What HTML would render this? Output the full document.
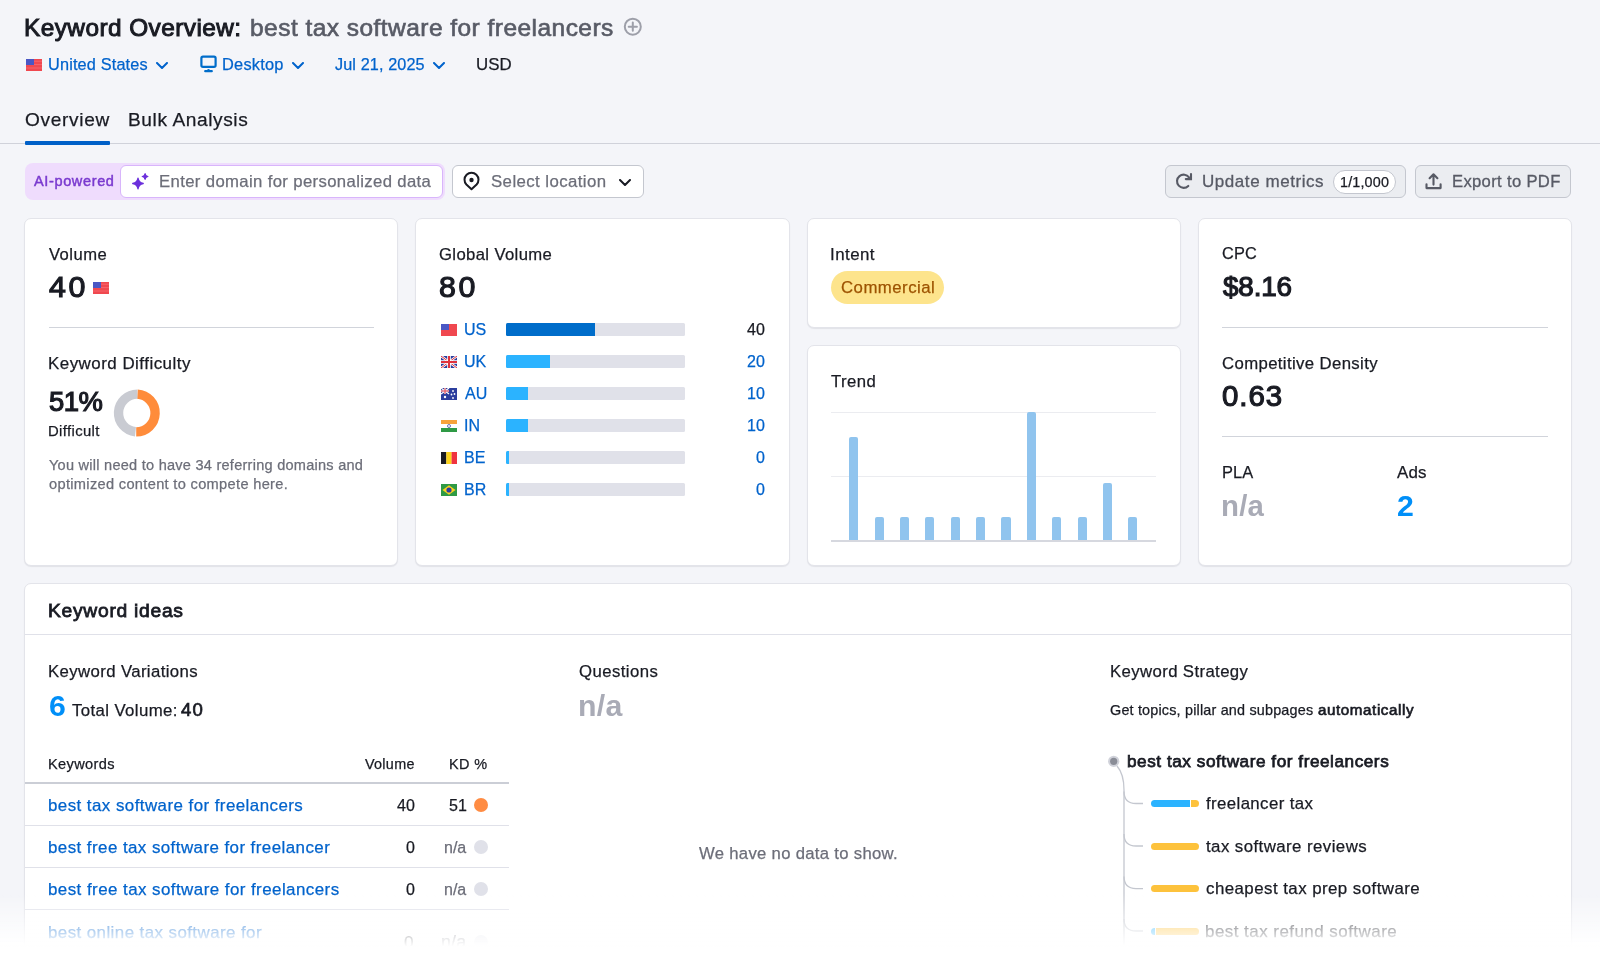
<!DOCTYPE html>
<html><head><meta charset="utf-8"><style>
html,body{margin:0;padding:0}
body{width:1600px;height:960px;overflow:hidden;background:#f4f5f9;position:relative;font-family:"Liberation Sans",sans-serif;}
.t{position:absolute;white-space:nowrap;will-change:transform}
.a{position:absolute}
.card{position:absolute;box-sizing:border-box;background:#fff;border:1px solid #e3e4ea;border-radius:7px;box-shadow:0 1px 1px rgba(25,27,35,.08)}
</style></head><body>
<div class="t" style="left:24.20px;top:14.00px;font-size:24.37px;line-height:27.00px;letter-spacing:0.456px;color:#191b23;font-weight:400;-webkit-text-stroke:1px #191b23;">Keyword Overview:</div>
<div class="t" style="left:250.30px;top:14.00px;font-size:24.50px;line-height:27.00px;letter-spacing:0.459px;color:#585b66;font-weight:400;-webkit-text-stroke:0.65px #585b66;">best tax software for freelancers</div>
<svg class="a" style="left:623px;top:17px" width="20" height="20" viewBox="0 0 20 20"><circle cx="9.8" cy="9.7" r="8" fill="none" stroke="#9d9fa9" stroke-width="2"/><path d="M9.8 5.6v8.2M5.7 9.7h8.2" stroke="#9d9fa9" stroke-width="2" stroke-linecap="round"/></svg>
<svg class="a" style="left:26px;top:59px" width="16" height="12" viewBox="0 0 16 12"><rect width="16" height="12" fill="#f0484f"/><rect y="1.7" width="16" height="1" fill="#ff8a8f" opacity=".45"/><rect y="5.1" width="16" height="1" fill="#ff8a8f" opacity=".45"/><rect y="8.5" width="16" height="1" fill="#ff8a8f" opacity=".45"/><rect width="8" height="6" fill="#4a57c4"/></svg>
<div class="t" style="left:47.80px;top:55.00px;font-size:16.30px;line-height:18.00px;letter-spacing:0.158px;color:#0063cc;font-weight:400;-webkit-text-stroke:0.25px #0063cc;">United States</div>
<svg class="a" style="left:155.5px;top:61.5px" width="12" height="7" viewBox="0 0 12 7"><path d="M1 1l5 5 5-5" fill="none" stroke="#0063cc" stroke-width="2" stroke-linecap="round" stroke-linejoin="round"/></svg>
<svg class="a" style="left:200px;top:55px" width="17" height="18" viewBox="0 0 17 18"><rect x="1.4" y="1.7" width="14.2" height="10.2" rx="1.6" fill="none" stroke="#006dca" stroke-width="2.2"/><path d="M5.2 16.2h6.6" stroke="#006dca" stroke-width="2.2" stroke-linecap="round"/><circle cx="8.5" cy="15.2" r="1.3" fill="#006dca"/></svg>
<div class="t" style="left:221.90px;top:55.00px;font-size:16.39px;line-height:18.00px;letter-spacing:0.233px;color:#0063cc;font-weight:400;-webkit-text-stroke:0.25px #0063cc;">Desktop</div>
<svg class="a" style="left:291.5px;top:61.5px" width="12" height="7" viewBox="0 0 12 7"><path d="M1 1l5 5 5-5" fill="none" stroke="#0063cc" stroke-width="2" stroke-linecap="round" stroke-linejoin="round"/></svg>
<div class="t" style="left:335.10px;top:55.00px;font-size:16.22px;line-height:18.00px;letter-spacing:0.118px;color:#0063cc;font-weight:400;-webkit-text-stroke:0.25px #0063cc;">Jul 21, 2025</div>
<svg class="a" style="left:433px;top:61.5px" width="12" height="7" viewBox="0 0 12 7"><path d="M1 1l5 5 5-5" fill="none" stroke="#0063cc" stroke-width="2" stroke-linecap="round" stroke-linejoin="round"/></svg>
<div class="t" style="left:475.70px;top:55.00px;font-size:16.85px;line-height:19.00px;letter-spacing:0.100px;color:#191b23;font-weight:400;-webkit-text-stroke:0.25px #191b23;">USD</div>
<div class="t" style="left:24.60px;top:109.00px;font-size:19.08px;line-height:21.00px;letter-spacing:0.671px;color:#191b23;font-weight:400;-webkit-text-stroke:0.25px #191b23;">Overview</div>
<div class="t" style="left:128.00px;top:109.00px;font-size:19.13px;line-height:21.00px;letter-spacing:0.592px;color:#191b23;font-weight:400;-webkit-text-stroke:0.25px #191b23;">Bulk Analysis</div>
<div class="a" style="left:0;top:143px;width:1600px;height:1px;background:#d0d2da"></div>
<div class="a" style="left:24.5px;top:141px;width:85px;height:3.5px;background:#0060c8;border-radius:1px"></div>
<div class="a" style="left:25px;top:163px;width:420px;height:37px;background:#efdcfd;border-radius:8px"></div>
<div class="a" style="left:120px;top:165px;width:321px;height:31px;background:#fff;border:1px solid #d8b5fb;border-radius:6px"></div>
<div class="t" style="left:34.00px;top:173.00px;font-size:14.53px;line-height:16.00px;letter-spacing:0.633px;color:#7a3acf;font-weight:400;-webkit-text-stroke:0.45px #7a3acf;">AI-powered</div>
<svg class="a" style="left:126px;top:166px" width="30" height="30" viewBox="0 0 30 30"><path d="M12 12.2 Q12.7 16.8 17.3 17.5 Q12.7 18.2 12 22.8 Q11.3 18.2 6.7 17.5 Q11.3 16.8 12 12.2Z" fill="#6c30dc" stroke="#6c30dc" stroke-width="1.3" stroke-linejoin="round"/><path d="M19.1 7.6 Q19.5 10.1 22 10.5 Q19.5 10.9 19.1 13.4 Q18.7 10.9 16.2 10.5 Q18.7 10.1 19.1 7.6Z" fill="#6c30dc" stroke="#6c30dc" stroke-width="1.1" stroke-linejoin="round"/></svg>
<div class="t" style="left:159.20px;top:172.00px;font-size:16.72px;line-height:19.00px;letter-spacing:0.361px;color:#6c6e79;font-weight:400;-webkit-text-stroke:0.25px #6c6e79;">Enter domain for personalized data</div>
<div class="a" style="left:452px;top:165px;width:190px;height:31px;background:#fff;border:1px solid #c4c7cf;border-radius:6px"></div>
<svg class="a" style="left:462px;top:171px" width="19" height="21" viewBox="0 0 19 21"><path d="M9.5 18.3 L4.4 13.5 A7 7 0 1 1 14.6 13.5 Z" fill="none" stroke="#191b23" stroke-width="2" stroke-linejoin="round"/><circle cx="9.5" cy="9" r="2.2" fill="#191b23"/></svg>
<div class="t" style="left:490.90px;top:172.00px;font-size:16.82px;line-height:19.00px;letter-spacing:0.407px;color:#6c6e79;font-weight:400;-webkit-text-stroke:0.25px #6c6e79;">Select location</div>
<svg class="a" style="left:618.5px;top:178.7px" width="12" height="7" viewBox="0 0 12 7"><path d="M1 1l5 5 5-5" fill="none" stroke="#191b23" stroke-width="2" stroke-linecap="round" stroke-linejoin="round"/></svg>
<div class="a" style="left:1165px;top:165px;width:239px;height:31px;background:#ebedf1;border:1px solid #c4c7cf;border-radius:6px"></div>
<svg class="a" style="left:1174px;top:172px" width="20" height="19" viewBox="0 0 20 19"><path d="M14.3 13.9 A6.6 6.6 0 1 1 15 5.4" fill="none" stroke="#575a65" stroke-width="2.1" stroke-linecap="round"/><path d="M17 2v5.1h-5.2" fill="none" stroke="#575a65" stroke-width="2.1" stroke-linecap="round" stroke-linejoin="miter"/></svg>
<div class="t" style="left:1201.70px;top:172.00px;font-size:17.00px;line-height:19.00px;letter-spacing:0.554px;color:#575a65;font-weight:400;-webkit-text-stroke:0.3px #575a65;">Update metrics</div>
<div class="a" style="left:1333px;top:170px;width:61px;height:22px;background:#fff;border:1px solid #c4c7cf;border-radius:12px"></div>
<div class="t" style="left:1340.00px;top:174.00px;font-size:14.35px;line-height:16.00px;letter-spacing:0.167px;color:#191b23;font-weight:400;-webkit-text-stroke:0.25px #191b23;">1/1,000</div>
<div class="a" style="left:1415px;top:165px;width:154px;height:31px;background:#ebedf1;border:1px solid #c4c7cf;border-radius:6px"></div>
<svg class="a" style="left:1424px;top:172px" width="19" height="18" viewBox="0 0 19 18"><path d="M2.5 12.2v3.9h14.1v-3.9" fill="none" stroke="#575a65" stroke-width="2.1" stroke-linecap="round" stroke-linejoin="round"/><path d="M9.5 12.6V2.4M5.6 6.2l3.9-3.9 3.9 3.9" fill="none" stroke="#575a65" stroke-width="2.1" stroke-linecap="round" stroke-linejoin="round"/></svg>
<div class="t" style="left:1452.10px;top:172.00px;font-size:16.61px;line-height:19.00px;letter-spacing:0.333px;color:#575a65;font-weight:400;-webkit-text-stroke:0.3px #575a65;">Export to PDF</div>
<div class="card" style="left:24px;top:218px;width:374.25px;height:348px"></div>
<div class="card" style="left:415.25px;top:218px;width:374.25px;height:348px"></div>
<div class="card" style="left:806.5px;top:218px;width:374.25px;height:110px"></div>
<div class="card" style="left:806.5px;top:345px;width:374.25px;height:221px"></div>
<div class="card" style="left:1197.75px;top:218px;width:374.25px;height:348px"></div>
<div class="t" style="left:49.20px;top:245.00px;font-size:16.63px;line-height:19.00px;letter-spacing:0.460px;color:#191b23;font-weight:400;-webkit-text-stroke:0.25px #191b23;">Volume</div>
<div class="t" style="left:49.20px;top:270.00px;font-size:30.37px;line-height:33.00px;letter-spacing:2.600px;color:#191b23;font-weight:400;-webkit-text-stroke:1.2px #191b23;">40</div>
<svg class="a" style="left:92.6px;top:282px" width="16" height="12" viewBox="0 0 16 12"><rect width="16" height="12" fill="#f0484f"/><rect y="1.7" width="16" height="1" fill="#ff8a8f" opacity=".45"/><rect y="5.1" width="16" height="1" fill="#ff8a8f" opacity=".45"/><rect y="8.5" width="16" height="1" fill="#ff8a8f" opacity=".45"/><rect width="8" height="6" fill="#4a57c4"/></svg>
<div class="a" style="left:49px;top:327px;width:325px;height:1px;background:#d1d4db"></div>
<div class="t" style="left:47.90px;top:354.00px;font-size:16.94px;line-height:19.00px;letter-spacing:0.476px;color:#191b23;font-weight:400;-webkit-text-stroke:0.25px #191b23;">Keyword Difficulty</div>
<div class="t" style="left:48.70px;top:386.00px;font-size:27.42px;line-height:31.00px;letter-spacing:-0.550px;color:#191b23;font-weight:400;-webkit-text-stroke:1.2px #191b23;">51%</div>
<div class="t" style="left:48.00px;top:423.00px;font-size:14.87px;line-height:16.00px;letter-spacing:0.363px;color:#191b23;font-weight:400;-webkit-text-stroke:0.25px #191b23;">Difficult</div>
<svg class="a" style="left:113px;top:389px" width="49" height="49" viewBox="0 0 49 49"><path d="M24.40 5.10 A18.9 18.9 0 0 1 23.21 42.86" fill="none" stroke="#ff8c3b" stroke-width="9.4"/><path d="M22.49 42.80 A18.9 18.9 0 0 1 24.38 5.10" fill="none" stroke="#c9cbd2" stroke-width="9.4"/></svg>
<div class="t" style="left:48.90px;top:457.00px;font-size:14.56px;line-height:16.00px;letter-spacing:0.249px;color:#6c6e79;font-weight:400;-webkit-text-stroke:0.25px #6c6e79;">You will need to have 34 referring domains and</div>
<div class="t" style="left:48.60px;top:476.00px;font-size:14.62px;line-height:16.00px;letter-spacing:0.321px;color:#6c6e79;font-weight:400;-webkit-text-stroke:0.25px #6c6e79;">optimized content to compete here.</div>
<div class="t" style="left:439.20px;top:245.00px;font-size:16.68px;line-height:19.00px;letter-spacing:0.367px;color:#191b23;font-weight:400;-webkit-text-stroke:0.25px #191b23;">Global Volume</div>
<div class="t" style="left:439.30px;top:270.00px;font-size:30.33px;line-height:33.00px;letter-spacing:2.600px;color:#191b23;font-weight:400;-webkit-text-stroke:1.2px #191b23;">80</div>
<svg class="a" style="left:441px;top:324.0px" width="16" height="12" viewBox="0 0 16 12"><rect width="16" height="12" fill="#f0484f"/><rect width="8" height="6" fill="#4a57c4"/></svg>
<div class="t" style="left:464.10px;top:321.00px;font-size:16.00px;line-height:17.00px;letter-spacing:0.000px;color:#0063cc;font-weight:400;-webkit-text-stroke:0.25px #0063cc;">US</div>
<div class="a" style="left:505.5px;top:322.7px;width:179.5px;height:13.5px;background:#e0e1e9;border-radius:1.5px;overflow:hidden"><div style="width:50%;height:100%;background:#006dca"></div></div>
<div class="t" style="left:746.80px;top:321.00px;font-size:16.00px;line-height:17.00px;letter-spacing:-0.000px;color:#191b23;font-weight:400;-webkit-text-stroke:0.25px #191b23;">40</div>
<svg class="a" style="left:441px;top:356.0px" width="16" height="12" viewBox="0 0 16 12"><rect width="16" height="12" fill="#2c3e9e"/><path d="M0 0L16 12M16 0L0 12" stroke="#fff" stroke-width="2.4"/><path d="M0 0L16 12M16 0L0 12" stroke="#e0323c" stroke-width="1"/><path d="M8 0V12M0 6H16" stroke="#fff" stroke-width="3.6"/><path d="M8 0V12M0 6H16" stroke="#e0323c" stroke-width="2"/></svg>
<div class="t" style="left:464.10px;top:353.00px;font-size:16.00px;line-height:17.00px;letter-spacing:0.000px;color:#0063cc;font-weight:400;-webkit-text-stroke:0.25px #0063cc;">UK</div>
<div class="a" style="left:505.5px;top:354.7px;width:179.5px;height:13.5px;background:#e0e1e9;border-radius:1.5px;overflow:hidden"><div style="width:25%;height:100%;background:#2bb3ff"></div></div>
<div class="t" style="left:746.80px;top:353.00px;font-size:16.00px;line-height:17.00px;letter-spacing:-0.000px;color:#0063cc;font-weight:400;-webkit-text-stroke:0.25px #0063cc;">20</div>
<svg class="a" style="left:441px;top:388.0px" width="16" height="12" viewBox="0 0 16 12"><rect width="16" height="12" fill="#2c3e9e"/><path d="M0 0L8 6M8 0L0 6" stroke="#fff" stroke-width="1.2"/><path d="M4 0V6M0 3H8" stroke="#fff" stroke-width="1.6"/><path d="M4 0V6M0 3H8" stroke="#e0323c" stroke-width=".9"/><circle cx="4" cy="9" r="1.2" fill="#fff"/><circle cx="12" cy="3" r=".9" fill="#fff"/><circle cx="10.5" cy="6.5" r=".9" fill="#fff"/><circle cx="13.5" cy="6" r=".9" fill="#fff"/><circle cx="12" cy="10" r=".9" fill="#fff"/></svg>
<div class="t" style="left:465.30px;top:385.00px;font-size:16.00px;line-height:17.00px;letter-spacing:0.000px;color:#0063cc;font-weight:400;-webkit-text-stroke:0.25px #0063cc;">AU</div>
<div class="a" style="left:505.5px;top:386.7px;width:179.5px;height:13.5px;background:#e0e1e9;border-radius:1.5px;overflow:hidden"><div style="width:12.5%;height:100%;background:#2bb3ff"></div></div>
<div class="t" style="left:746.80px;top:385.00px;font-size:16.00px;line-height:17.00px;letter-spacing:0.000px;color:#0063cc;font-weight:400;-webkit-text-stroke:0.25px #0063cc;">10</div>
<svg class="a" style="left:441px;top:420.0px" width="16" height="12" viewBox="0 0 16 12"><rect width="16" height="4" fill="#f7a33b"/><rect y="4" width="16" height="4" fill="#fff"/><rect y="8" width="16" height="4" fill="#2f9a45"/><circle cx="8" cy="6" r="1.5" fill="none" stroke="#2c3e9e" stroke-width=".7"/></svg>
<div class="t" style="left:463.90px;top:417.00px;font-size:16.00px;line-height:17.00px;letter-spacing:0.000px;color:#0063cc;font-weight:400;-webkit-text-stroke:0.25px #0063cc;">IN</div>
<div class="a" style="left:505.5px;top:418.7px;width:179.5px;height:13.5px;background:#e0e1e9;border-radius:1.5px;overflow:hidden"><div style="width:12.5%;height:100%;background:#2bb3ff"></div></div>
<div class="t" style="left:746.80px;top:417.00px;font-size:16.00px;line-height:17.00px;letter-spacing:0.000px;color:#0063cc;font-weight:400;-webkit-text-stroke:0.25px #0063cc;">10</div>
<svg class="a" style="left:441px;top:452.0px" width="16" height="12" viewBox="0 0 16 12"><rect width="5.4" height="12" fill="#191b23"/><rect x="5.3" width="5.4" height="12" fill="#fcd31e"/><rect x="10.6" width="5.4" height="12" fill="#ef3340"/></svg>
<div class="t" style="left:464.00px;top:449.00px;font-size:16.00px;line-height:17.00px;letter-spacing:0.000px;color:#0063cc;font-weight:400;-webkit-text-stroke:0.25px #0063cc;">BE</div>
<div class="a" style="left:505.5px;top:450.7px;width:179.5px;height:13.5px;background:#e0e1e9;border-radius:1.5px;overflow:hidden"><div style="width:1.7%;height:100%;background:#2bb3ff"></div></div>
<div class="t" style="left:755.70px;top:449.00px;font-size:16.00px;line-height:17.00px;letter-spacing:0.000px;color:#0063cc;font-weight:400;-webkit-text-stroke:0.25px #0063cc;">0</div>
<svg class="a" style="left:441px;top:484.0px" width="16" height="12" viewBox="0 0 16 12"><rect width="16" height="12" fill="#2f9a45"/><path d="M8 1.3L14.5 6L8 10.7L1.5 6Z" fill="#fcd31e"/><circle cx="8" cy="6" r="2.6" fill="#2c3e9e"/></svg>
<div class="t" style="left:464.00px;top:481.00px;font-size:16.00px;line-height:17.00px;letter-spacing:0.000px;color:#0063cc;font-weight:400;-webkit-text-stroke:0.25px #0063cc;">BR</div>
<div class="a" style="left:505.5px;top:482.7px;width:179.5px;height:13.5px;background:#e0e1e9;border-radius:1.5px;overflow:hidden"><div style="width:1.7%;height:100%;background:#2bb3ff"></div></div>
<div class="t" style="left:755.70px;top:481.00px;font-size:16.00px;line-height:17.00px;letter-spacing:0.000px;color:#0063cc;font-weight:400;-webkit-text-stroke:0.25px #0063cc;">0</div>
<div class="t" style="left:830.00px;top:245.00px;font-size:16.89px;line-height:19.00px;letter-spacing:0.460px;color:#191b23;font-weight:400;-webkit-text-stroke:0.25px #191b23;">Intent</div>
<div class="a" style="left:831px;top:271px;width:113px;height:33px;background:#fde48c;border-radius:17px"></div>
<div class="t" style="left:840.70px;top:278.00px;font-size:16.79px;line-height:19.00px;letter-spacing:0.467px;color:#9d5300;font-weight:400;-webkit-text-stroke:0.25px #9d5300;">Commercial</div>
<div class="t" style="left:831.20px;top:372.00px;font-size:16.71px;line-height:19.00px;letter-spacing:0.450px;color:#191b23;font-weight:400;-webkit-text-stroke:0.25px #191b23;">Trend</div>
<div class="a" style="left:831px;top:411.5px;width:325px;height:1px;background:#ebecf0"></div>
<div class="a" style="left:831px;top:475.75px;width:325px;height:1px;background:#ebecf0"></div>
<div class="a" style="left:849.20px;top:436.7px;width:9.2px;height:103.8px;background:#90c4ee;border-radius:2px 2px 0 0"></div>
<div class="a" style="left:874.57px;top:517.3px;width:9.2px;height:23.2px;background:#90c4ee;border-radius:2px 2px 0 0"></div>
<div class="a" style="left:899.94px;top:517.3px;width:9.2px;height:23.2px;background:#90c4ee;border-radius:2px 2px 0 0"></div>
<div class="a" style="left:925.31px;top:517.3px;width:9.2px;height:23.2px;background:#90c4ee;border-radius:2px 2px 0 0"></div>
<div class="a" style="left:950.68px;top:517.3px;width:9.2px;height:23.2px;background:#90c4ee;border-radius:2px 2px 0 0"></div>
<div class="a" style="left:976.05px;top:517.3px;width:9.2px;height:23.2px;background:#90c4ee;border-radius:2px 2px 0 0"></div>
<div class="a" style="left:1001.42px;top:517.3px;width:9.2px;height:23.2px;background:#90c4ee;border-radius:2px 2px 0 0"></div>
<div class="a" style="left:1026.79px;top:411.7px;width:9.2px;height:128.8px;background:#90c4ee;border-radius:2px 2px 0 0"></div>
<div class="a" style="left:1052.16px;top:517.3px;width:9.2px;height:23.2px;background:#90c4ee;border-radius:2px 2px 0 0"></div>
<div class="a" style="left:1077.53px;top:517.3px;width:9.2px;height:23.2px;background:#90c4ee;border-radius:2px 2px 0 0"></div>
<div class="a" style="left:1102.90px;top:482.8px;width:9.2px;height:57.7px;background:#90c4ee;border-radius:2px 2px 0 0"></div>
<div class="a" style="left:1128.27px;top:517.3px;width:9.2px;height:23.2px;background:#90c4ee;border-radius:2px 2px 0 0"></div>
<div class="a" style="left:831px;top:540px;width:325px;height:2px;background:#d6d8df"></div>
<div class="t" style="left:1222.00px;top:244.00px;font-size:16.34px;line-height:18.00px;letter-spacing:0.100px;color:#191b23;font-weight:400;-webkit-text-stroke:0.25px #191b23;">CPC</div>
<div class="t" style="left:1223.10px;top:271.00px;font-size:27.80px;line-height:31.00px;letter-spacing:-0.125px;color:#191b23;font-weight:400;-webkit-text-stroke:1.2px #191b23;">$8.16</div>
<div class="a" style="left:1222px;top:327px;width:326px;height:1px;background:#d1d4db"></div>
<div class="t" style="left:1222.00px;top:354.00px;font-size:16.76px;line-height:19.00px;letter-spacing:0.367px;color:#191b23;font-weight:400;-webkit-text-stroke:0.25px #191b23;">Competitive Density</div>
<div class="t" style="left:1222.30px;top:379.00px;font-size:29.44px;line-height:33.00px;letter-spacing:0.967px;color:#191b23;font-weight:400;-webkit-text-stroke:1.2px #191b23;">0.63</div>
<div class="a" style="left:1222px;top:436px;width:326px;height:1px;background:#d1d4db"></div>
<div class="t" style="left:1221.50px;top:463.00px;font-size:16.42px;line-height:18.00px;letter-spacing:0.050px;color:#191b23;font-weight:400;-webkit-text-stroke:0.25px #191b23;">PLA</div>
<div class="t" style="left:1220.90px;top:489.00px;font-size:29.40px;line-height:33.00px;letter-spacing:0.200px;color:#a9abb6;font-weight:700;">n/a</div>
<div class="t" style="left:1397.00px;top:463.00px;font-size:16.95px;line-height:19.00px;letter-spacing:0.200px;color:#191b23;font-weight:400;-webkit-text-stroke:0.25px #191b23;">Ads</div>
<div class="t" style="left:1396.70px;top:489.00px;font-size:30.24px;line-height:33.00px;letter-spacing:0.000px;color:#008ff8;font-weight:700;">2</div>
<div class="card" style="left:24px;top:583px;width:1548px;height:500px"></div>
<div class="a" style="left:25px;top:634px;width:1546px;height:1px;background:#e0e1e9"></div>
<div class="t" style="left:48.10px;top:600.00px;font-size:19.27px;line-height:21.00px;letter-spacing:0.717px;color:#191b23;font-weight:400;-webkit-text-stroke:0.8px #191b23;">Keyword ideas</div>
<div class="t" style="left:48.00px;top:662.00px;font-size:16.76px;line-height:19.00px;letter-spacing:0.382px;color:#191b23;font-weight:400;-webkit-text-stroke:0.25px #191b23;">Keyword Variations</div>
<div class="t" style="left:48.95px;top:689.00px;font-size:30.24px;line-height:33.00px;letter-spacing:0.000px;color:#008ff8;font-weight:700;">6</div>
<div class="t" style="left:71.90px;top:701.00px;font-size:16.79px;line-height:19.00px;letter-spacing:0.392px;color:#191b23;font-weight:400;-webkit-text-stroke:0.25px #191b23;">Total Volume:</div>
<div class="t" style="left:181.20px;top:699.00px;font-size:18.56px;line-height:21.00px;letter-spacing:1.100px;color:#191b23;font-weight:400;-webkit-text-stroke:0.7px #191b23;">40</div>
<div class="t" style="left:47.70px;top:756.00px;font-size:14.58px;line-height:16.00px;letter-spacing:0.357px;color:#191b23;font-weight:400;-webkit-text-stroke:0.25px #191b23;">Keywords</div>
<div class="t" style="left:365.00px;top:756.00px;font-size:14.40px;line-height:16.00px;letter-spacing:0.280px;color:#191b23;font-weight:400;-webkit-text-stroke:0.25px #191b23;">Volume</div>
<div class="t" style="left:449.20px;top:756.00px;font-size:14.48px;line-height:16.00px;letter-spacing:0.367px;color:#191b23;font-weight:400;-webkit-text-stroke:0.25px #191b23;">KD %</div>
<div class="a" style="left:25px;top:782px;width:484px;height:2px;background:#cbced6"></div>
<div class="t" style="left:47.80px;top:796.00px;font-size:16.92px;line-height:19.00px;letter-spacing:0.444px;color:#0063cc;font-weight:400;-webkit-text-stroke:0.25px #0063cc;">best tax software for freelancers</div>
<div class="t" style="left:396.60px;top:797.00px;font-size:16.00px;line-height:17.00px;letter-spacing:-0.000px;color:#191b23;font-weight:400;-webkit-text-stroke:0.25px #191b23;">40</div>
<div class="t" style="left:448.90px;top:797.00px;font-size:16.00px;line-height:17.00px;letter-spacing:0.000px;color:#191b23;font-weight:400;-webkit-text-stroke:0.25px #191b23;">51</div>
<div class="a" style="left:473.5px;top:798.2px;width:14px;height:14px;border-radius:50%;background:#ff8c43"></div>
<div class="a" style="left:25px;top:825.2px;width:484px;height:1px;background:#e0e1e9"></div>
<div class="t" style="left:47.80px;top:838.00px;font-size:16.93px;line-height:19.00px;letter-spacing:0.433px;color:#0063cc;font-weight:400;-webkit-text-stroke:0.25px #0063cc;">best free tax software for freelancer</div>
<div class="t" style="left:405.50px;top:839.00px;font-size:16.00px;line-height:17.00px;letter-spacing:0.000px;color:#191b23;font-weight:400;-webkit-text-stroke:0.25px #191b23;">0</div>
<div class="t" style="left:443.80px;top:839.00px;font-size:16.00px;line-height:17.00px;letter-spacing:-0.000px;color:#6c6e79;font-weight:400;-webkit-text-stroke:0.25px #6c6e79;">n/a</div>
<div class="a" style="left:473.5px;top:840.2px;width:14px;height:14px;border-radius:50%;background:#e0e1e9"></div>
<div class="a" style="left:25px;top:867.2px;width:484px;height:1px;background:#e0e1e9"></div>
<div class="t" style="left:47.80px;top:880.00px;font-size:16.93px;line-height:19.00px;letter-spacing:0.446px;color:#0063cc;font-weight:400;-webkit-text-stroke:0.25px #0063cc;">best free tax software for freelancers</div>
<div class="t" style="left:405.50px;top:881.00px;font-size:16.00px;line-height:17.00px;letter-spacing:0.000px;color:#191b23;font-weight:400;-webkit-text-stroke:0.25px #191b23;">0</div>
<div class="t" style="left:443.80px;top:881.00px;font-size:16.00px;line-height:17.00px;letter-spacing:-0.000px;color:#6c6e79;font-weight:400;-webkit-text-stroke:0.25px #6c6e79;">n/a</div>
<div class="a" style="left:473.5px;top:882.2px;width:14px;height:14px;border-radius:50%;background:#e0e1e9"></div>
<div class="a" style="left:25px;top:909.2px;width:484px;height:1px;background:#e0e1e9"></div>
<div class="t" style="left:47.80px;top:923.00px;font-size:16.91px;line-height:19.00px;letter-spacing:0.426px;color:#0063cc;font-weight:400;-webkit-text-stroke:0.25px #0063cc;">best online tax software for</div>
<div class="t" style="left:404.10px;top:932.00px;font-size:17.28px;line-height:20.00px;letter-spacing:0.000px;color:#191b23;font-weight:400;-webkit-text-stroke:0.25px #191b23;">0</div>
<div class="t" style="left:440.90px;top:932.00px;font-size:17.78px;line-height:20.00px;letter-spacing:0.200px;color:#6c6e79;font-weight:400;-webkit-text-stroke:0.25px #6c6e79;">n/a</div>
<div class="a" style="left:473.5px;top:935px;width:14px;height:14px;border-radius:50%;background:#e0e1e9"></div>
<div class="t" style="left:578.90px;top:662.00px;font-size:16.73px;line-height:19.00px;letter-spacing:0.437px;color:#191b23;font-weight:400;-webkit-text-stroke:0.25px #191b23;">Questions</div>
<div class="t" style="left:577.70px;top:689.00px;font-size:30.25px;line-height:33.00px;letter-spacing:0.350px;color:#a9abb6;font-weight:700;">n/a</div>
<div class="t" style="left:698.80px;top:844.00px;font-size:16.66px;line-height:19.00px;letter-spacing:0.317px;color:#6c6e79;font-weight:400;-webkit-text-stroke:0.25px #6c6e79;">We have no data to show.</div>
<div class="t" style="left:1109.70px;top:662.00px;font-size:16.75px;line-height:19.00px;letter-spacing:0.380px;color:#191b23;font-weight:400;-webkit-text-stroke:0.25px #191b23;">Keyword Strategy</div>
<div class="t" style="left:1110.30px;top:702.00px;font-size:14.40px;line-height:16.00px;letter-spacing:0.183px;color:#191b23;font-weight:400;-webkit-text-stroke:0.25px #191b23;">Get topics, pillar and subpages</div>
<div class="t" style="left:1317.80px;top:701.00px;font-size:15.16px;line-height:17.00px;letter-spacing:0.592px;color:#191b23;font-weight:400;-webkit-text-stroke:0.65px #191b23;">automatically</div>
<svg class="a" style="left:1100px;top:750px" width="60" height="210" viewBox="0 0 60 210"><path d="M17 16 Q24 24 24 40 V210" fill="none" stroke="#c4c7cf" stroke-width="1.3"/><path d="M24 41.5 Q24 53.5 36 53.5 H43" fill="none" stroke="#c4c7cf" stroke-width="1.3"/><path d="M24 84 Q24 96 36 96 H43" fill="none" stroke="#c4c7cf" stroke-width="1.3"/><path d="M24 126.6 Q24 138.6 36 138.6 H43" fill="none" stroke="#c4c7cf" stroke-width="1.3"/><path d="M24 169 Q24 181 36 181 H43" fill="none" stroke="#c4c7cf" stroke-width="1.3"/><circle cx="13.7" cy="11.3" r="5.6" fill="#d0d2da"/><circle cx="13.7" cy="11.3" r="3.6" fill="#8a8d97"/></svg>
<div class="t" style="left:1126.90px;top:751.00px;font-size:17.17px;line-height:20.00px;letter-spacing:0.550px;color:#191b23;font-weight:400;-webkit-text-stroke:0.75px #191b23;">best tax software for freelancers</div>
<div class="t" style="left:1206.20px;top:794.00px;font-size:16.81px;line-height:19.00px;letter-spacing:0.392px;color:#191b23;font-weight:400;-webkit-text-stroke:0.25px #191b23;">freelancer tax</div>
<div class="a" style="left:1151px;top:800.1px;width:48px;height:7px;border-radius:4px;overflow:hidden;display:flex"><div style="width:40px;height:100%;background:#2bb3ff;"></div><div style="width:8px;height:100%;background:#fdc23c;margin-left:1px;"></div></div>
<div class="t" style="left:1206.20px;top:837.00px;font-size:16.83px;line-height:19.00px;letter-spacing:0.432px;color:#191b23;font-weight:400;-webkit-text-stroke:0.25px #191b23;">tax software reviews</div>
<div class="a" style="left:1151px;top:842.7px;width:48px;height:7px;border-radius:4px;overflow:hidden;display:flex"><div style="width:48px;height:100%;background:#fdc23c;"></div></div>
<div class="t" style="left:1205.70px;top:879.00px;font-size:16.89px;line-height:19.00px;letter-spacing:0.444px;color:#191b23;font-weight:400;-webkit-text-stroke:0.25px #191b23;">cheapest tax prep software</div>
<div class="a" style="left:1151px;top:885.1px;width:48px;height:7px;border-radius:4px;overflow:hidden;display:flex"><div style="width:48px;height:100%;background:#fdc23c;"></div></div>
<div class="t" style="left:1205.40px;top:922.00px;font-size:16.94px;line-height:19.00px;letter-spacing:0.474px;color:#191b23;font-weight:400;-webkit-text-stroke:0.25px #191b23;">best tax refund software</div>
<div class="a" style="left:1151px;top:927.7px;width:48px;height:7px;border-radius:4px;overflow:hidden;display:flex"><div style="width:4px;height:100%;background:#2bb3ff;"></div><div style="width:44px;height:100%;background:#fdc23c;margin-left:1px;"></div></div>
<div class="a" style="left:0;top:893px;width:1600px;height:67px;background:linear-gradient(to bottom,rgba(255,255,255,0) 0%,rgba(255,255,255,1) 80%,#fff 100%)"></div>
</body></html>
